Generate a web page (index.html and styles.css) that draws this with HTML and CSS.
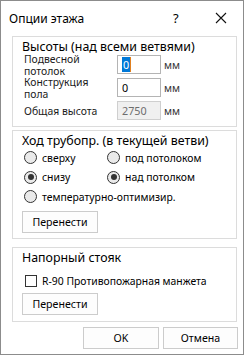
FILE: index.html
```html
<!DOCTYPE html>
<html>
<head>
<meta charset="utf-8">
<link rel="stylesheet" href="styles.css">
</head>
<body>
<div class="win">
  <div class="titlebar">
    <span class="title">Опции этажа</span>
    <span class="help">?</span>
    <svg class="close" width="12" height="12" viewBox="0 0 12 12"><path d="M1 1 L11 11 M11 1 L1 11" stroke="#111" stroke-width="1.1" fill="none"/></svg>
  </div>
  <div class="content">
    <div class="group g1">
      <div class="gtitle">Высоты (над всеми ветвями)</div>
      <div class="fields">
        <div class="frow">
          <div class="flabel">Подвесной<br>потолок</div>
          <div class="inp"><span class="sel">0</span></div>
          <div class="unit">мм</div>
        </div>
        <div class="frow">
          <div class="flabel">Конструкция<br>пола</div>
          <div class="inp">0</div>
          <div class="unit">мм</div>
        </div>
        <div class="frow">
          <div class="flabel">Общая высота</div>
          <div class="inp dis">2750</div>
          <div class="unit">мм</div>
        </div>
      </div>
    </div>
    <div class="group g2">
      <div class="gtitle">Ход трубопр. (в текущей ветви)</div>
      <div class="radios">
        <div class="radio"><span class="rb"></span>сверху</div>
        <div class="radio"><span class="rb"></span>под потолоком</div>
        <div class="radio"><span class="rb on"></span>снизу</div>
        <div class="radio"><span class="rb on"></span>над потолком</div>
        <div class="radio wide"><span class="rb"></span>температурно-оптимизир.</div>
      </div>
      <div class="btn move">Перенести</div>
    </div>
    <div class="group g3">
      <div class="gtitle">Напорный стояк</div>
      <div class="check"><span class="cb"></span>R-90 Противопожарная манжета</div>
      <div class="btn move">Перенести</div>
    </div>
    <div class="footer">
      <div class="btn ok">OK</div>
      <div class="btn cancel">Отмена</div>
    </div>
  </div>
</div>
</body>
</html>
```
FILE: styles.css
```css
html, body { margin: 0; padding: 0; background: #fff; }
body { width: 245px; height: 357px; overflow: hidden; font-family: "Noto Sans", "Liberation Sans", sans-serif; color: #000; }
.win { box-sizing: border-box; width: 244px; height: 355px; border: 1px solid #8c8c8c; background: #fff; display: flex; flex-direction: column; }
.titlebar { height: 30px; display: flex; align-items: center; position: relative; flex: none; }
.title { font-size: 12px; margin-left: 8px; margin-top: 4px; }
.help { position: absolute; left: 172px; top: 8px; font-size: 13px; }
.close { position: absolute; left: 214px; top: 11px; }
.content { padding: 5px 7px 0 11px; display: flex; flex-direction: column; }
.group { box-sizing: border-box; width: 225px; border: 1px solid #dcdcdc; padding: 0 0 0 9px; flex: none; }
.gtitle { font-size: 12.4px; line-height: 14px; margin-top: 3px; }
.g1 { height: 91px; }
.g2 { height: 109px; margin-top: 3px; }
.g3 { height: 75px; margin-top: 8px; }
.fields { margin-top: -1px; }
.frow { display: flex; align-items: center; height: 23px; }
.flabel { width: 93px; margin-left: 2px; font-size: 10.4px; line-height: 12px; color: #1a1a1a; }
.inp { box-sizing: border-box; width: 44px; height: 19px; border: 1px solid #b4b4b4; font-size: 10.8px; line-height: 17px; padding-left: 4px; background: #fff; }
.inp.dis { background: #f0f0f0; border-color: #cfcfcf; color: #6d6d6d; }
.sel { background: #0078d7; color: #fff; padding: 0 1px; border-right: 1px solid #e08020; }
.unit { margin-left: 3px; font-size: 10.4px; color: #333; }
.radios { display: grid; grid-template-columns: 83px 1fr; margin-top: 0; margin-left: 2px; }
.radio { display: flex; align-items: center; height: 19.5px; font-size: 10.4px; }
.radio.wide { grid-column: 1 / 3; }
.rb { box-sizing: border-box; width: 13px; height: 13px; border: 1px solid #333; border-radius: 50%; background: #eaeaea; margin-right: 5px; position: relative; flex: none; }
.rb.on::after { content: ""; position: absolute; left: 2.5px; top: 2.5px; width: 6px; height: 6px; border-radius: 50%; background: #333; }
.btn { box-sizing: border-box; height: 22px; border: 1px solid #cccccc; background: #fdfdfd; display: flex; align-items: center; justify-content: center; font-size: 10.6px; flex: none; }
.move { width: 76px; margin-top: 4.5px; }
.check { display: flex; align-items: center; font-size: 10.4px; margin-top: 8.5px; margin-left: 3px; height: 14px; }
.cb { box-sizing: border-box; width: 12px; height: 12px; border: 1px solid #333; background: #fff; margin-right: 5px; flex: none; }
.g3 .move { margin-top: 5.5px; }
.footer { display: flex; justify-content: flex-end; gap: 4px; margin-top: 5px; width: 226px; }
.ok { width: 76px; }
.cancel { width: 75px; }
```
